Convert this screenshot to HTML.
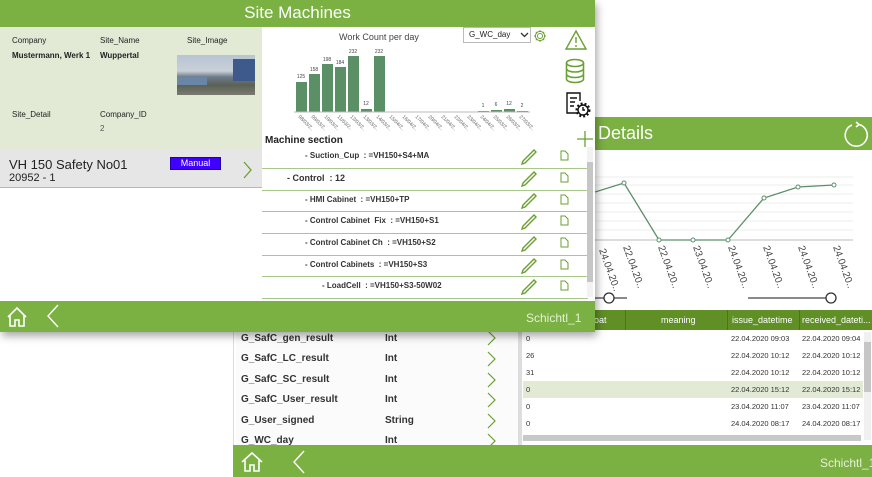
<!DOCTYPE html>
<html><head><meta charset="utf-8"><style>
*{margin:0;padding:0;box-sizing:border-box}
body{width:872px;height:477px;position:relative;overflow:hidden;background:#fff;font-family:"Liberation Sans",sans-serif;color:#222}
.a{position:absolute}
.g{background:#7bb042}
.b{font-weight:bold}
.tr span{white-space:nowrap}
</style></head><body>

<!-- BACK WINDOW -->
<div class="a" style="left:233px;top:117px;width:639px;height:360px;background:#fff;border-left:1px solid #ddd">
 <div class="a g" style="left:0;top:0;width:639px;height:33px"></div>
 <div class="a" style="left:364px;top:6px;color:#fff;font-size:18px">Details</div>
 <svg class="a" style="left:608px;top:4px" width="28" height="28" viewBox="0 0 28 28"><path d="M10 4 A11 11 0 1 0 17 3.5" fill="none" stroke="#fff" stroke-width="1.6"/><path d="M17 3.5 L14 1 M17 3.5 L14 6" stroke="#fff" stroke-width="1.6" fill="none"/></svg>
</div>
<!-- back chart -->
<svg class="a" style="left:595px;top:150px" width="272" height="160">
 <g stroke="#eee" stroke-width="1"><line x1="0" y1="27" x2="258" y2="27"/><line x1="0" y1="35" x2="258" y2="35"/><line x1="0" y1="44" x2="258" y2="44"/><line x1="0" y1="53" x2="258" y2="53"/><line x1="0" y1="62" x2="258" y2="62"/><line x1="0" y1="71" x2="258" y2="71"/><line x1="0" y1="80" x2="258" y2="80"/></g>
 <line x1="0" y1="90" x2="258" y2="90" stroke="#bbb"/>
 <polyline fill="none" stroke="#5b8f6b" stroke-width="1.3" points="0,42 29,33 64,90 98,90 133,90 169,48 203,37 239,35"/>
 <g fill="#fff" stroke="#5b8f6b"><circle cx="29" cy="33" r="2"/><circle cx="64" cy="90" r="2"/><circle cx="98" cy="90" r="2"/><circle cx="133" cy="90" r="2"/><circle cx="169" cy="48" r="2"/><circle cx="203" cy="37" r="2"/><circle cx="239" cy="35" r="2"/></g>
 <g font-size="10" fill="#444" font-family="Liberation Sans">
  <text transform="translate(4,100) rotate(70)">24.04.20..</text>
  <text transform="translate(28,97) rotate(70)">22.04.20..</text>
  <text transform="translate(63,97) rotate(70)">22.04.20..</text>
  <text transform="translate(98,97) rotate(70)">23.04.20..</text>
  <text transform="translate(133,97) rotate(70)">24.04.20..</text>
  <text transform="translate(168,97) rotate(70)">24.04.20..</text>
  <text transform="translate(203,97) rotate(70)">24.04.20..</text>
  <text transform="translate(238,97) rotate(70)">24.04.20..</text>
 </g>
 <line x1="0" y1="148" x2="32" y2="148" stroke="#444" stroke-width="1.2"/><circle cx="14" cy="148" r="5" fill="#fff" stroke="#333" stroke-width="1.3"/>
 <line x1="153" y1="148" x2="236" y2="148" stroke="#444" stroke-width="1.2"/><circle cx="236" cy="148" r="5" fill="#fff" stroke="#333" stroke-width="1.3"/>
</svg>
<!-- table header -->
<div class="a" style="left:520px;top:310px;width:352px;height:20px;background:#5f8f25;color:#fff;font-size:9px;line-height:20px;white-space:nowrap">
 <span class="a" style="left:74px">oat</span>
 <span class="a" style="left:105px;top:0;width:1px;height:20px;background:#4a741a"></span>
 <span class="a" style="left:141px">meaning</span>
 <span class="a" style="left:207px;top:0;width:1px;height:20px;background:#4a741a"></span>
 <span class="a" style="left:212px">issue_datetime</span>
 <span class="a" style="left:279px;top:0;width:1px;height:20px;background:#4a741a"></span>
 <span class="a" style="left:282px">received_dateti...</span>
</div>
<div class="a tr" style="left:523px;top:330px;width:340px;height:115px;font-size:7.5px;color:#333">
 <div class="a" style="top:0;left:0;width:340px;height:17px;line-height:17px"><span class="a" style="left:3px">0</span><span class="a" style="left:208px">22.04.2020 09:03</span><span class="a" style="left:279px">22.04.2020 09:04</span></div>
 <div class="a" style="top:17px;left:0;width:340px;height:17px;line-height:17px"><span class="a" style="left:3px">26</span><span class="a" style="left:208px">22.04.2020 10:12</span><span class="a" style="left:279px">22.04.2020 10:12</span></div>
 <div class="a" style="top:34px;left:0;width:340px;height:17px;line-height:17px"><span class="a" style="left:3px">31</span><span class="a" style="left:208px">22.04.2020 10:12</span><span class="a" style="left:279px">22.04.2020 10:12</span></div>
 <div class="a" style="top:51px;left:0;width:340px;height:17px;line-height:17px;background:#e2ead6"><span class="a" style="left:3px">0</span><span class="a" style="left:208px">22.04.2020 15:12</span><span class="a" style="left:279px">22.04.2020 15:12</span></div>
 <div class="a" style="top:68px;left:0;width:340px;height:17px;line-height:17px"><span class="a" style="left:3px">0</span><span class="a" style="left:208px">23.04.2020 11:07</span><span class="a" style="left:279px">23.04.2020 11:07</span></div>
 <div class="a" style="top:85px;left:0;width:340px;height:17px;line-height:17px"><span class="a" style="left:3px">0</span><span class="a" style="left:208px">24.04.2020 08:17</span><span class="a" style="left:279px">24.04.2020 08:17</span></div>
 <div class="a" style="top:105px;left:0;width:338px;height:6px;background:#c8c8c8"></div>
</div>
<div class="a" style="left:864px;top:332px;width:7px;height:108px;background:#f0f0f0"><div style="margin-top:10px;height:50px;background:#c6c6c6"></div></div>
<!-- back left list -->
<div class="a" style="left:236px;top:330px;width:284px;height:115px;background:#fbfbfb;font-size:10px;font-weight:bold;color:#333">
 <div class="a" style="top:3px;left:5px">G_SafC_gen_result</div><div class="a" style="top:3px;left:149px">Int</div>
 <div class="a" style="top:23px;left:5px">G_SafC_LC_result</div><div class="a" style="top:23px;left:149px">Int</div>
 <div class="a" style="top:44px;left:5px">G_SafC_SC_result</div><div class="a" style="top:44px;left:149px">Int</div>
 <div class="a" style="top:64px;left:5px">G_SafC_User_result</div><div class="a" style="top:64px;left:149px">Int</div>
 <div class="a" style="top:85px;left:5px">G_User_signed</div><div class="a" style="top:85px;left:149px">String</div>
 <div class="a" style="top:105px;left:5px">G_WC_day</div><div class="a" style="top:105px;left:149px">Int</div>
 <svg class="a" style="left:250px;top:0" width="12" height="115" fill="none" stroke="#6aa032" stroke-width="1.2"><path d="M2 1 L9 8 L2 15"/><path d="M2 22 L9 29 L2 36"/><path d="M2 43 L9 50 L2 57"/><path d="M2 63 L9 70 L2 77"/><path d="M2 84 L9 91 L2 98"/><path d="M2 104 L9 111 L2 118"/></svg>
</div>
<div class="a" style="left:518px;top:330px;width:4px;height:115px;background:#ddd"></div>
<div class="a g" style="left:233px;top:445px;width:639px;height:32px"></div>
<svg class="a" style="left:240px;top:451px" width="24" height="22" fill="none" stroke="#fff" stroke-width="1.6"><path d="M2 11 L12 2 L22 11 M5 9 V20 H10 V14 H14 V20 H19 V9"/></svg>
<svg class="a" style="left:292px;top:450px" width="14" height="24" fill="none" stroke="#fff" stroke-width="1.4"><path d="M12 1 L2 12 L12 23"/></svg>
<div class="a" style="left:820px;top:456px;color:#e6f0da;font-size:12px">Schichtl_1</div>

<!-- FRONT WINDOW -->
<div class="a" style="left:0;top:0;width:595px;height:332px;background:#fff;box-shadow:2px 4px 8px rgba(0,0,0,.35)">
 <div class="a g" style="left:0;top:0;width:595px;height:27px"></div>
 <div class="a" style="left:0;top:3px;width:595px;text-align:center;color:#fff;font-size:17px">Site Machines</div>
 <div class="a" style="left:0;top:27px;width:262px;height:123px;background:#e2ead6;font-size:8px;color:#222">
  <div class="a" style="left:12px;top:9px">Company</div>
  <div class="a" style="left:100px;top:9px">Site_Name</div>
  <div class="a" style="left:187px;top:9px">Site_Image</div>
  <div class="a b" style="left:12px;top:24px">Mustermann, Werk 1</div>
  <div class="a b" style="left:100px;top:24px">Wuppertal</div>
  <div class="a" style="left:177px;top:28px;width:78px;height:40px;background:linear-gradient(#b8c4d4 0,#c9d0d8 40%,#6d7a8a 55%,#5c6156 75%,#7a7a70 100%)"><div class="a" style="right:0;top:4px;width:22px;height:22px;background:#3e5a8c"></div><div class="a" style="left:0;top:22px;width:30px;height:8px;background:#6a86a6"></div></div>
  <div class="a" style="left:12px;top:83px">Site_Detail</div>
  <div class="a" style="left:100px;top:83px">Company_ID</div>
  <div class="a" style="left:100px;top:97px;color:#555">2</div>
 </div>
 <div class="a" style="left:0;top:150px;width:262px;height:38px;background:#e6e6e6;border-bottom:1px solid #a8c88a">
  <div class="a" style="left:9px;top:7px;font-size:13px">VH 150 Safety No01</div>
  <div class="a" style="left:9px;top:22px;font-size:11px">20952 - 1</div>
  <div class="a" style="left:170px;top:7px;width:51px;height:13px;background:#3f00ff;border:1px solid #2200aa;color:#fff;font-size:9px;text-align:center;line-height:11px">Manual</div>
  <svg class="a" style="left:243px;top:11px" width="10" height="18" fill="none" stroke="#6aa032" stroke-width="1.3"><path d="M1 1 L8 9 L1 17"/></svg>
 </div>
 <!-- chart -->
 <div class="a" style="left:339px;top:32px;font-size:9px;color:#444">Work Count per day</div>
 <div class="a" style="left:463px;top:27px;width:68px;height:16px;border:1px solid #bbb;font-size:8px;line-height:14px;padding-left:5px">G_WC_day<svg class="a" style="left:56px;top:4px" width="9" height="6" fill="none" stroke="#333" stroke-width="1.3"><path d="M1 1 L4.5 4.5 L8 1"/></svg></div>
 <svg class="a" style="left:533px;top:29px" width="14" height="14" fill="none" stroke="#6aa032" stroke-width="1"><circle cx="7" cy="7" r="2.5"/><path d="M7 1 V3 M7 11 V13 M1 7 H3 M11 7 H13 M2.8 2.8 L4.2 4.2 M9.8 9.8 L11.2 11.2 M2.8 11.2 L4.2 9.8 M9.8 4.2 L11.2 2.8"/><circle cx="7" cy="7" r="4.6"/></svg>
 <svg class="a" style="left:285px;top:40px" width="260" height="95" font-family="Liberation Sans">
  <g fill="#5b8f65"><rect x="11" y="42" width="11" height="30"/><rect x="24" y="34" width="11" height="38"/><rect x="37" y="24" width="11" height="48"/><rect x="50" y="27" width="11" height="45"/><rect x="63" y="16" width="11" height="56"/><rect x="76" y="69" width="11" height="3"/><rect x="89" y="16" width="11" height="56"/><rect x="193" y="71" width="11" height="1"/><rect x="206" y="70" width="11" height="2"/><rect x="219" y="69" width="11" height="3"/><rect x="232" y="71" width="11" height="1"/></g>
  <line x1="9" y1="72" x2="245" y2="72" stroke="#bbb"/>
  <g font-size="5" fill="#444" text-anchor="middle"><text x="16" y="38">125</text><text x="29" y="31">158</text><text x="42" y="21">198</text><text x="55" y="24">184</text><text x="68" y="13">232</text><text x="81" y="65">12</text><text x="94" y="13">232</text><text x="198" y="67">1</text><text x="211" y="66">6</text><text x="224" y="65">12</text><text x="237" y="67">2</text></g>
  <g font-size="5" fill="#666"><text transform="translate(13,77) rotate(45)">08/03/2..</text><text transform="translate(26,77) rotate(45)">09/03/2..</text><text transform="translate(39,77) rotate(45)">10/03/2..</text><text transform="translate(52,77) rotate(45)">11/03/2..</text><text transform="translate(65,77) rotate(45)">12/03/2..</text><text transform="translate(78,77) rotate(45)">13/03/2..</text><text transform="translate(91,77) rotate(45)">14/03/2..</text><text transform="translate(104,77) rotate(45)">15/04/2..</text><text transform="translate(117,77) rotate(45)">16/04/2..</text><text transform="translate(130,77) rotate(45)">17/04/2..</text><text transform="translate(143,77) rotate(45)">20/04/2..</text><text transform="translate(156,77) rotate(45)">21/04/2..</text><text transform="translate(169,77) rotate(45)">22/04/2..</text><text transform="translate(182,77) rotate(45)">23/04/2..</text><text transform="translate(195,77) rotate(45)">24/04/2..</text><text transform="translate(208,77) rotate(45)">25/03/2..</text><text transform="translate(221,77) rotate(45)">26/03/2..</text><text transform="translate(234,77) rotate(45)">27/03/2..</text></g>
 </svg>
 <!-- icons -->
 <svg class="a" style="left:565px;top:30px" width="22" height="20" fill="none" stroke="#6aa032" stroke-width="1.4"><path d="M11 1 L21 19 H1 Z M11 7 V13 M11 15 V17"/></svg>
 <svg class="a" style="left:565px;top:58px" width="20" height="26" fill="none" stroke="#6aa032" stroke-width="1.6"><ellipse cx="10" cy="5" rx="8.5" ry="3.5"/><path d="M1.5 5 V21 A8.5 3.5 0 0 0 18.5 21 V5 M1.5 10.5 A8.5 3.5 0 0 0 18.5 10.5 M1.5 16 A8.5 3.5 0 0 0 18.5 16"/></svg>
 <svg class="a" style="left:565px;top:92px" width="26" height="26" fill="none" stroke="#111" stroke-width="1.4"><path d="M13 21 H2 V1 H15 V9 M5 6 H12 M5 10 H10 M5 14 H9"/><circle cx="18" cy="18" r="5"/><circle cx="18" cy="18" r="6.5" stroke-dasharray="2 2" stroke-width="2"/><path d="M18 15 V18 H20"/></svg>
 <svg class="a" style="left:577px;top:131px" width="16" height="16" stroke="#6aa032" stroke-width="1.3"><path d="M8 0 V16 M0 8 H16"/></svg>
 <div class="a b" style="left:265px;top:135px;font-size:10px">Machine section</div>
 <div class="a" style="left:262px;top:147px;width:326px;height:153px;font-size:8px;font-weight:bold;color:#333">
  <div class="a" style="left:43px;top:4px">- Suction_Cup &nbsp;: =VH150+S4+MA</div>
  <div class="a" style="left:25px;top:26px;font-size:9px">- Control &nbsp;: 12</div>
  <div class="a" style="left:43px;top:48px">- HMI Cabinet &nbsp;: =VH150+TP</div>
  <div class="a" style="left:43px;top:69px">- Control Cabinet &nbsp;Fix &nbsp;: =VH150+S1</div>
  <div class="a" style="left:43px;top:91px">- Control Cabinet Ch &nbsp;: =VH150+S2</div>
  <div class="a" style="left:43px;top:113px">- Control Cabinets &nbsp;: =VH150+S3</div>
  <div class="a" style="left:60px;top:134px">- LoadCell &nbsp;: =VH150+S3-50W02</div>
  <div class="a" style="left:0;top:21px;width:326px;height:1px;background:#a8c88a"></div>
  <div class="a" style="left:0;top:43px;width:326px;height:1px;background:#a8c88a"></div>
  <div class="a" style="left:0;top:64px;width:326px;height:1px;background:#a8c88a"></div>
  <div class="a" style="left:0;top:86px;width:326px;height:1px;background:#a8c88a"></div>
  <div class="a" style="left:0;top:108px;width:326px;height:1px;background:#a8c88a"></div>
  <div class="a" style="left:0;top:129px;width:326px;height:1px;background:#a8c88a"></div>
  <div class="a" style="left:0;top:151px;width:326px;height:1px;background:#a8c88a"></div>
  <svg class="a" style="left:258px;top:0" width="50" height="153" fill="none" stroke="#6aa032" stroke-width="1.4">
   <g id="r"><path d="M3 14 L14 3 L16 5 L5 16 L2 17 Z"/><path d="M45 4 H41 V13 H48 V7 Z" stroke-width="1"/></g>
   <use href="#r" y="22"/><use href="#r" y="44"/><use href="#r" y="65"/><use href="#r" y="87"/><use href="#r" y="109"/><use href="#r" y="130"/>
  </svg>
 </div>
 <div class="a" style="left:587px;top:147px;width:6px;height:150px;background:#f2f2f2"><div style="margin-top:15px;height:120px;background:#c6c6c6"></div></div>
 <div class="a g" style="left:0;top:301px;width:595px;height:31px"></div>
 <svg class="a" style="left:6px;top:306px" width="22" height="22" fill="none" stroke="#fff" stroke-width="1.6"><path d="M2 11 L11 2 L20 11 M4 9 V20 H9 V14 H13 V20 H18 V9"/></svg>
 <svg class="a" style="left:46px;top:304px" width="14" height="24" fill="none" stroke="#fff" stroke-width="1.4"><path d="M12 1 L2 12 L12 23"/></svg>
 <div class="a" style="left:526px;top:311px;color:#e6f0da;font-size:12px">Schichtl_1</div>
</div>
</body></html>
